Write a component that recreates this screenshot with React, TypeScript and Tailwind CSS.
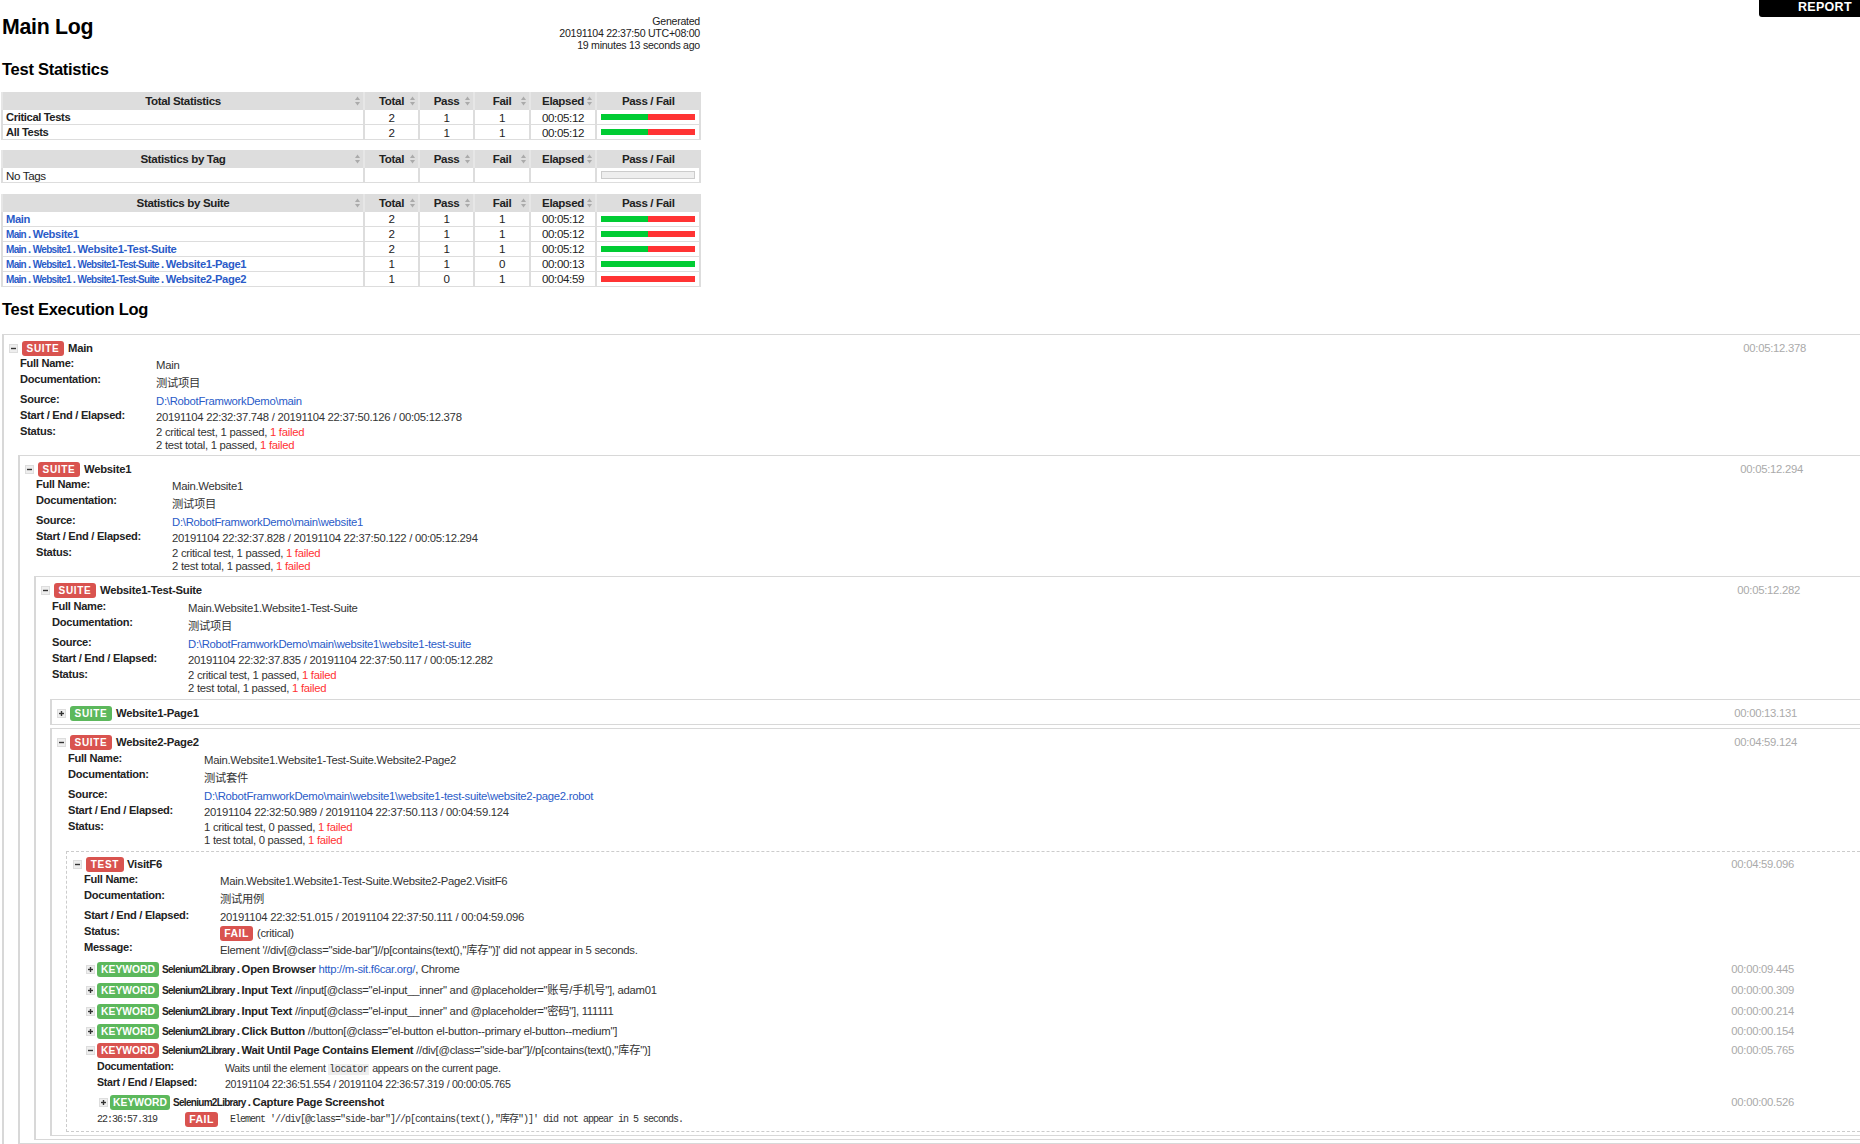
import type { ReactNode } from "react";
import clsx from "clsx";

// Robot Framework style log page, everything static

interface StatRow {
  name: ReactNode;
  total?: number;
  pass?: number;
  fail?: number;
  elapsed?: string;
  bar?: "split" | "pass" | "fail" | "empty";
}

function SortIcon() {
  return (
    <svg width="5" height="10" viewBox="0 0 5 10" className="absolute right-[3px] top-[3px]">
      <path d="M2.5 0.5 L5 4 L0 4 Z" fill="#aaa" />
      <path d="M2.5 9.5 L5 6 L0 6 Z" fill="#aaa" />
    </svg>
  );
}

function Bar({ kind }: { kind: StatRow["bar"] }) {
  if (kind === "empty") {
    return <div className="mx-[4px] h-[8px] bg-[#eee] border border-[#ccc]" />;
  }
  return (
    <div className="mx-[4px] h-[6px] flex">
      {kind !== "fail" && <div className="flex-1 bg-[#00cc33]" />}
      {kind !== "pass" && <div className="flex-1 bg-[#ff3333]" />}
    </div>
  );
}

function HeadCell({ children, sort = true }: { children: ReactNode; sort?: boolean }) {
  return (
    <th className="h-[17px] p-0 bg-[#ddd] border border-[#ddd] border-l-2 border-l-[#e6e6e6] font-bold text-[#222]">
      <div className="relative leading-[16px]">
        {children}
        {sort && <SortIcon />}
      </div>
    </th>
  );
}

function StatTable({ title, rows, className }: { title: string; rows: StatRow[]; className?: string }) {
  return (
    <table className={clsx("table-fixed border-collapse w-[698px] ml-[1px] text-[11.6px] tracking-[-0.37px]", className)}>
      <colgroup>
        <col className="w-[362px]" />
        <col className="w-[55px]" />
        <col className="w-[55px]" />
        <col className="w-[56px]" />
        <col className="w-[66px]" />
        <col className="w-[104px]" />
      </colgroup>
      <thead>
        <tr>
          <HeadCell>{title}</HeadCell>
          <HeadCell>Total</HeadCell>
          <HeadCell>Pass</HeadCell>
          <HeadCell>Fail</HeadCell>
          <HeadCell>Elapsed</HeadCell>
          <HeadCell sort={false}>Pass / Fail</HeadCell>
        </tr>
      </thead>
      <tbody>
        {rows.map((row, i) => (
          <tr key={i} className="text-[#222]">
            <td className="h-[15px] p-0 pl-[3px] border border-[#ddd] border-x-2 leading-[13px] whitespace-nowrap">{row.name}</td>
            <td className="p-0 text-center border border-[#ddd] border-x-2 leading-[13px]">{row.total}</td>
            <td className="p-0 text-center border border-[#ddd] border-x-2 leading-[13px]">{row.pass}</td>
            <td className="p-0 text-center border border-[#ddd] border-x-2 leading-[13px]">{row.fail}</td>
            <td className="p-0 text-center border border-[#ddd] border-x-2 leading-[13px]">{row.elapsed}</td>
            <td className="p-0 border border-[#ddd] border-x-2">
              <Bar kind={row.bar} />
            </td>
          </tr>
        ))}
      </tbody>
    </table>
  );
}

// parent suite names are printed small and tight
function Parent({ children }: { children: ReactNode }) {
  return <span className="text-[10px] leading-none tracking-[-0.07em]">{children}</span>;
}

function Dot() {
  return <span className="mx-[2px]">.</span>;
}

function SuiteLink({ parents = [], name }: { parents?: string[]; name: string }) {
  return (
    <a className="text-[#2a5bc8] font-bold text-[11.2px]">
      {parents.map((p) => (
        <span key={p}>
          <Parent>{p}</Parent>
          <Dot />
        </span>
      ))}
      {name}
    </a>
  );
}

function Toggle({ open }: { open: boolean }) {
  return (
    <span className="w-[9px] h-[9px] shrink-0 bg-[#eee] border border-[#ddd] flex items-center justify-center">
      <svg width="5" height="5" viewBox="0 0 5 5">
        <path d="M0 2.5 H5" stroke="#333" strokeWidth="1.4" />
        {!open && <path d="M2.5 0 V5" stroke="#333" strokeWidth="1.4" />}
      </svg>
    </span>
  );
}

function Badge({ kind, children, className }: { kind: "pass" | "fail"; children: ReactNode; className?: string }) {
  return (
    <span
      className={clsx(
        "h-[15px] shrink-0 rounded-[3px] text-white font-bold leading-[15px] text-center",
        kind === "fail" ? "bg-[#d9534f]" : "bg-[#5cb85c]",
        className,
      )}
    >
      {children}
    </span>
  );
}

interface MetaProps {
  label: string;
  className: string;
  labelClass?: string;
  valueClass?: string;
  children: ReactNode;
}

function Meta({ label, className, labelClass = "w-[136px] text-[11.1px]", valueClass = "pt-[1px]", children }: MetaProps) {
  return (
    <div className={clsx("flex", className)}>
      <div className={clsx("font-bold text-[#222] leading-[13px] shrink-0", labelClass)}>{label}</div>
      <div className={clsx("leading-[14px] text-[#333] whitespace-nowrap", valueClass)}>{children}</div>
    </div>
  );
}

function Failed({ children }: { children: ReactNode }) {
  return <span className="text-[#ff3333]">{children}</span>;
}

interface SuiteProps {
  name: string;
  status: "pass" | "fail";
  elapsed: string;
  elapsedClass: string;
  open?: boolean;
  fullName?: string;
  doc?: string;
  source?: string;
  times?: string;
  critical?: ReactNode;
  total?: ReactNode;
  className?: string;
  metaClass?: string;
  childrenClass?: string;
  children?: ReactNode;
}

function Suite({ name, status, elapsed, elapsedClass, open = true, fullName, doc, source, times, critical, total, className, metaClass = "pt-[1px]", childrenClass = "pt-[2px]", children }: SuiteProps) {
  return (
    <div className={clsx("border-t border-b border-l-2 border-[#d8d8d8] pt-[6px] pb-[3px]", className)}>
      <div className="flex items-center h-[15px] pl-[5px]">
        <Toggle open={open} />
        <Badge kind={status} className="ml-[4px] w-[42px] text-[10px] tracking-[0.7px]">SUITE</Badge>
        <span className="ml-[4px] font-bold text-[#222]">{name}</span>
        <span className={clsx("ml-auto text-[#aaa] text-[11.3px]", elapsedClass)}>{elapsed}</span>
      </div>
      {open && (
        <div className={clsx("pl-[16px]", metaClass)}>
          <Meta label="Full Name:" className="h-[16px]">{fullName}</Meta>
          <Meta label="Documentation:" className="h-[20px]" valueClass="pt-[3px]">{doc}</Meta>
          <Meta label="Source:" className="h-[16px]">
            <a className="text-[#2a5bc8]">{source}</a>
          </Meta>
          <Meta label="Start / End / Elapsed:" className="h-[16px]">{times}</Meta>
          <Meta label="Status:" className="h-[28px]">
            <div className="leading-[13px]">{critical}</div>
            <div className="leading-[13px]">{total}</div>
          </Meta>
        </div>
      )}
      {children && <div className={clsx("pl-[14px]", childrenClass)}>{children}</div>}
    </div>
  );
}

function StatusText({ a, b, label }: { a: number; b: number; label: string }) {
  return (
    <>
      {a} {label}, {b} passed, <Failed>1 failed</Failed>
    </>
  );
}

interface KeywordRowProps {
  status: "pass" | "fail";
  open?: boolean;
  name: string;
  className: string;
  badgeClass?: string;
  children?: ReactNode;
}

function KeywordRow({ status, open = false, name, className, badgeClass = "w-[62px]", children }: KeywordRowProps) {
  return (
    <div className={clsx("flex items-center", className)}>
      <Toggle open={open} />
      <Badge kind={status} className={clsx("ml-[2px] text-[10.3px] tracking-[0px]", badgeClass)}>KEYWORD</Badge>
      <span className="ml-[3px] whitespace-nowrap text-[#333]">
        <span className="font-bold text-[#222]">
          <Parent>Selenium2Library</Parent>
          <Dot />
          {name}
        </span>{" "}
        {children}
      </span>
    </div>
  );
}

function Elapsed({ children, className }: { children: string; className: string }) {
  return <span className={clsx("ml-auto text-[#aaa] text-[11.3px]", className)}>{children}</span>;
}

export default function App() {
  const split = { total: 2, pass: 1, fail: 1, elapsed: "00:05:12", bar: "split" as const };
  const bold = "font-bold text-[11.2px]";

  return (
    <div className="relative w-[1860px] h-[1144px] overflow-hidden bg-white text-[11.3px] tracking-[-0.27px] font-['Liberation_Sans','Noto_Sans_CJK_SC',sans-serif]">
      {/* report tab sits over the page corner */}
      <div className="absolute right-0 top-0 w-[101px] h-[17px] bg-black rounded-bl-[3px] text-white font-bold text-[12.5px] leading-[15px] tracking-[0.3px] pl-[39px]">
        REPORT
      </div>

      <div className="w-[700px] flex justify-between pt-[15px] h-[56px]">
        <h1 className="pl-[2px] text-[21.3px] font-bold leading-[24px] text-black">Main Log</h1>
        <div className="text-right text-[10.6px] leading-[12px] text-[#222]">
          <div>Generated</div>
          <div>20191104 22:37:50 UTC+08:00</div>
          <div>19 minutes 13 seconds ago</div>
        </div>
      </div>

      <h2 className="pl-[2px] text-[16.5px] font-bold leading-[20px] text-black h-[36px] pt-[3px]">Test Statistics</h2>

      <StatTable
        title="Total Statistics"
        rows={[
          { name: <span className={bold}>Critical Tests</span>, ...split },
          { name: <span className={bold}>All Tests</span>, ...split },
        ]}
      />
      <StatTable title="Statistics by Tag" className="mt-[10px]" rows={[{ name: "No Tags", bar: "empty" }]} />
      <StatTable
        title="Statistics by Suite"
        className="mt-[10.5px]"
        rows={[
          { name: <SuiteLink name="Main" />, ...split },
          { name: <SuiteLink parents={["Main"]} name="Website1" />, ...split },
          { name: <SuiteLink parents={["Main", "Website1"]} name="Website1-Test-Suite" />, ...split },
          {
            name: <SuiteLink parents={["Main", "Website1", "Website1-Test-Suite"]} name="Website1-Page1" />,
            total: 1,
            pass: 1,
            fail: 0,
            elapsed: "00:00:13",
            bar: "pass",
          },
          {
            name: <SuiteLink parents={["Main", "Website1", "Website1-Test-Suite"]} name="Website2-Page2" />,
            total: 1,
            pass: 0,
            fail: 1,
            elapsed: "00:04:59",
            bar: "fail",
          },
        ]}
      />

      <h2 className="pl-[2px] pt-[12px] h-[47px] text-[16.5px] font-bold leading-[20px] text-black">Test Execution Log</h2>

      <Suite
        className="ml-[2px]"
        name="Main"
        status="fail"
        elapsed="00:05:12.378"
        elapsedClass="mr-[54px]"
        fullName="Main"
        doc="测试项目"
        source="D:\RobotFramworkDemo\main"
        times="20191104 22:32:37.748 / 20191104 22:37:50.126 / 00:05:12.378"
        critical={<StatusText a={2} b={1} label="critical test" />}
        total={<StatusText a={2} b={1} label="test total" />}
      >
        <Suite
          name="Website1"
          status="fail"
          elapsed="00:05:12.294"
          elapsedClass="mr-[57px]"
          fullName="Main.Website1"
          doc="测试项目"
          source="D:\RobotFramworkDemo\main\website1"
          times="20191104 22:32:37.828 / 20191104 22:37:50.122 / 00:05:12.294"
          critical={<StatusText a={2} b={1} label="critical test" />}
          total={<StatusText a={2} b={1} label="test total" />}
        >
          <Suite
            name="Website1-Test-Suite"
            status="fail"
            elapsed="00:05:12.282"
            elapsedClass="mr-[60px]"
            metaClass="pt-[2.5px]"
            childrenClass="pt-[2.5px]"
            fullName="Main.Website1.Website1-Test-Suite"
            doc="测试项目"
            source="D:\RobotFramworkDemo\main\website1\website1-test-suite"
            times="20191104 22:32:37.835 / 20191104 22:37:50.117 / 00:05:12.282"
            critical={<StatusText a={2} b={1} label="critical test" />}
            total={<StatusText a={2} b={1} label="test total" />}
          >
            <Suite name="Website1-Page1" status="pass" open={false} elapsed="00:00:13.131" elapsedClass="mr-[63px]" className="mb-[3px]" />
            <Suite
              name="Website2-Page2"
              status="fail"
              elapsed="00:04:59.124"
              elapsedClass="mr-[63px]"
              metaClass="pt-[2px]"
              childrenClass="pt-[3px]"
              fullName="Main.Website1.Website1-Test-Suite.Website2-Page2"
              doc="测试套件"
              source="D:\RobotFramworkDemo\main\website1\website1-test-suite\website2-page2.robot"
              times="20191104 22:32:50.989 / 20191104 22:37:50.113 / 00:04:59.124"
              critical={<StatusText a={1} b={0} label="critical test" />}
              total={<StatusText a={1} b={0} label="test total" />}
            >
              <div className="border border-r-0 border-dashed border-[#ccc] pt-[5px] pb-[3px]">
                <div className="flex items-center h-[15px] pl-[6px]">
                  <Toggle open />
                  <Badge kind="fail" className="ml-[4px] w-[38px] text-[10px] tracking-[0.7px]">TEST</Badge>
                  <span className="ml-[3px] font-bold text-[#222]">VisitF6</span>
                  <Elapsed className="mr-[66px]">00:04:59.096</Elapsed>
                </div>
                <div className="pl-[17px] pt-[1px]">
                  <Meta label="Full Name:" className="h-[16px]">Main.Website1.Website1-Test-Suite.Website2-Page2.VisitF6</Meta>
                  <Meta label="Documentation:" className="h-[20px]" valueClass="pt-[3px]">测试用例</Meta>
                  <Meta label="Start / End / Elapsed:" className="h-[16px]">20191104 22:32:51.015 / 20191104 22:37:50.111 / 00:04:59.096</Meta>
                  <Meta label="Status:" className="h-[16px]">
                    <div className="flex items-center">
                      <Badge kind="fail" className="w-[33px] text-[10.5px] tracking-[0.5px]">FAIL</Badge>
                      <span className="ml-[4px]">(critical)</span>
                    </div>
                  </Meta>
                  <Meta label="Message:" className="h-[15px]" valueClass="pt-[2px]">Element '//div[@class="side-bar"]//p[contains(text(),"库存")]' did not appear in 5 seconds.</Meta>
                </div>
                <div className="pl-[19px] pt-[4px]">
                  <div className="flex items-center">
                    <KeywordRow status="pass" name="Open Browser" className="h-[20px]">
                      <a className="text-[#2a5bc8]">http://m-sit.f6car.org/</a>, Chrome
                    </KeywordRow>
                    <Elapsed className="mr-[66px]">00:00:09.445</Elapsed>
                  </div>
                  <div className="flex items-center">
                    <KeywordRow status="pass" name="Input Text" className="h-[21px]">
                      //input[@class="el-input__inner" and @placeholder="账号/手机号"], adam01
                    </KeywordRow>
                    <Elapsed className="mr-[66px]">00:00:00.309</Elapsed>
                  </div>
                  <div className="flex items-center">
                    <KeywordRow status="pass" name="Input Text" className="h-[21px]">
                      //input[@class="el-input__inner" and @placeholder="密码"], 111111
                    </KeywordRow>
                    <Elapsed className="mr-[66px]">00:00:00.214</Elapsed>
                  </div>
                  <div className="flex items-center">
                    <KeywordRow status="pass" name="Click Button" className="h-[19px]">
                      //button[@class="el-button el-button--primary el-button--medium"]
                    </KeywordRow>
                    <Elapsed className="mr-[66px]">00:00:00.154</Elapsed>
                  </div>
                  <div className="flex items-center">
                    <KeywordRow status="fail" open name="Wait Until Page Contains Element" className="h-[19px]">
                      //div[@class="side-bar"]//p[contains(text(),"库存")]
                    </KeywordRow>
                    <Elapsed className="mr-[66px]">00:00:05.765</Elapsed>
                  </div>
                  <div className="pl-[11px] text-[10.6px]">
                    <Meta label="Documentation:" labelClass="w-[128px] text-[10.6px]" className="h-[16px]">
                      Waits until the element <code className="bg-[#eee] px-[1px] font-['Liberation_Mono',monospace] text-[10px] tracking-[-0.4px]">locator</code> appears on the current page.
                    </Meta>
                    <Meta label="Start / End / Elapsed:" labelClass="w-[128px] text-[10.6px]" className="h-[18px]">20191104 22:36:51.554 / 20191104 22:36:57.319 / 00:00:05.765</Meta>
                  </div>
                  <div className="flex items-center pl-[13px]">
                    <KeywordRow status="pass" name="Capture Page Screenshot" badgeClass="w-[60px]" className="h-[18px]" />
                    <Elapsed className="mr-[66px]">00:00:00.526</Elapsed>
                  </div>
                  <div className="flex items-center pl-[11px] h-[16px] font-['Liberation_Mono','Noto_Sans_CJK_SC',monospace] text-[10px] tracking-[-1px] text-[#333]">
                    <span className="w-[88px]">22:36:57.319</span>
                    <Badge kind="fail" className="w-[33px] text-[10.5px] tracking-[0.5px] font-['Liberation_Sans',sans-serif]">FAIL</Badge>
                    <span className="ml-[12px] whitespace-nowrap">Element '//div[@class="side-bar"]//p[contains(text(),"库存")]' did not appear in 5 seconds.</span>
                  </div>
                </div>
              </div>
            </Suite>
          </Suite>
        </Suite>
      </Suite>
    </div>
  );
}
